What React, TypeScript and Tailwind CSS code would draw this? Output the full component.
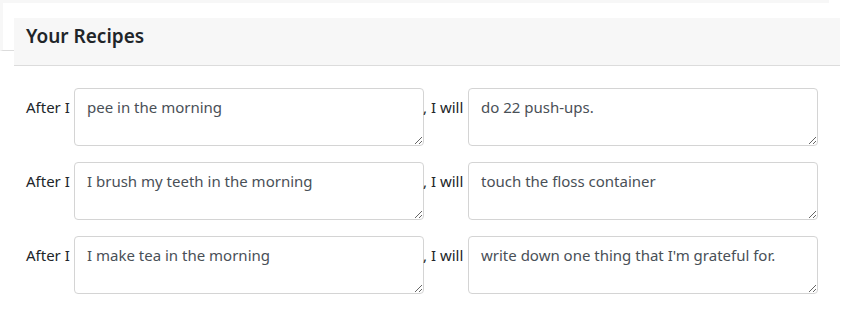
const recipes = [
  { after: 'pee in the morning', will: 'do 22 push-ups.' },
  { after: 'I brush my teeth in the morning', will: 'touch the floss container' },
  { after: 'I make tea in the morning', will: "write down one thing that I'm grateful for." },
];

export default function App() {
  return (
    <div
      className="w-[862px] h-[322px] bg-white text-[#212529] overflow-hidden"
      style={{ fontFamily: '"Noto Sans", "Open Sans", sans-serif' }}
    >
      {/* remnant of the card above */}
      <div className="h-[3px] w-[829px] bg-[#f7f7f7]" />
      <div className="flex items-start">
        <div className="w-[14px] h-[48px] border-l-[3px] border-l-[#f7f7f7] border-b border-b-[#dcdcdc]" />

        {/* Recipes card */}
        <div className="mt-[15px] w-[826px]">
          <div className="h-[48px] bg-[#f7f7f7] border-b border-[#dcdcdc] pl-[12px] pt-[4px]">
            <h5 className="text-[19px] leading-[28px] font-semibold">Your Recipes</h5>
          </div>

          <div className="pt-[22px] pl-[12px] flex flex-col gap-[16px]">
            {recipes.map((r, i) => (
              <div key={i} className="flex items-start">
                <label className="w-[48px] pt-[7px] text-[15px] leading-[24px]">After I</label>
                <textarea
                  defaultValue={r.after}
                  className="w-[350px] h-[58px] border border-[#d4d4d4] rounded-[4px] px-[12px] pt-[6px] pb-[6px] text-[15px] leading-[24px] text-[#495057] outline-none"
                />
                <label className="w-[45px] -ml-[1px] pt-[7px] text-[15px] leading-[24px] whitespace-nowrap">, I will</label>
                <textarea
                  defaultValue={r.will}
                  className="w-[350px] h-[58px] border border-[#d4d4d4] rounded-[4px] px-[12px] pt-[6px] pb-[6px] text-[15px] leading-[24px] text-[#495057] outline-none"
                />
              </div>
            ))}
          </div>
        </div>
      </div>
    </div>
  );
}
